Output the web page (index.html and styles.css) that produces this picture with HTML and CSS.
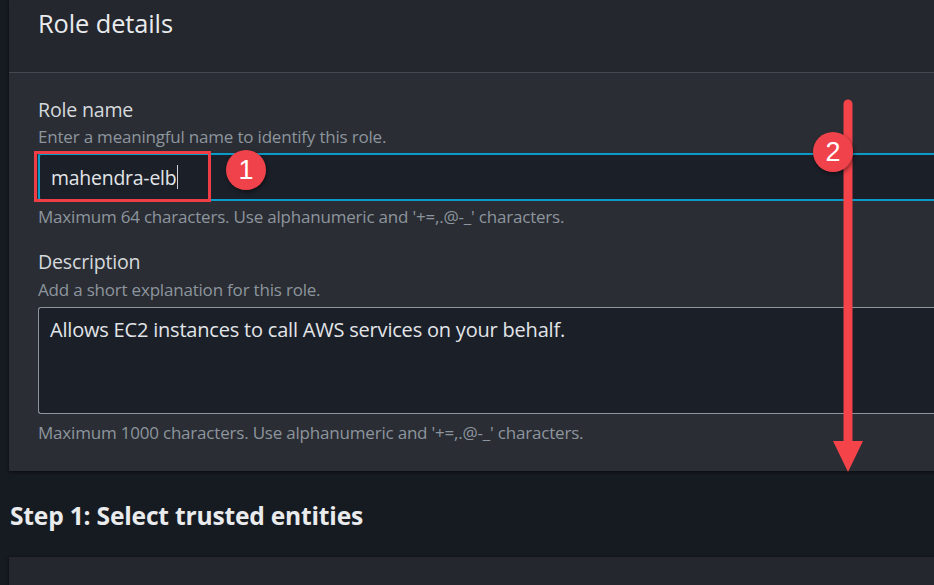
FILE: index.html
```html
<!DOCTYPE html>
<html>
<head>
<meta charset="utf-8">
<link rel="stylesheet" href="styles.css">
</head>
<body>
<div class="page">
  <section class="panel">
    <header class="panel-head"><h2>Role details</h2></header>
    <div class="panel-body">
      <div class="field">
        <div class="label">Role name</div>
        <div class="hint">Enter a meaningful name to identify this role.</div>
        <div class="input-wrap">
          <div class="input"><span class="val">mahendra-elb</span><span class="caret"></span></div>
          <div class="highlight"></div>
        </div>
        <div class="constraint">Maximum 64 characters. Use alphanumeric and '+=,.@-_' characters.</div>
      </div>
      <div class="field">
        <div class="label">Description</div>
        <div class="hint">Add a short explanation for this role.</div>
        <div class="textarea">Allows EC2 instances to call AWS services on your behalf.</div>
        <div class="constraint constraint-last">Maximum 1000 characters. Use alphanumeric and '+=,.@-_' characters.</div>
      </div>
    </div>
  </section>
  <h2 class="step">Step 1: Select trusted entities</h2>
  <section class="panel panel-next"></section>

  <div class="badge badge-1">1</div>
  <svg class="arrow" width="40" height="380" viewBox="0 0 40 380">
    <line x1="20" y1="5" x2="20" y2="345" stroke="#f5434a" stroke-width="9" stroke-linecap="round"/>
    <polygon points="5,342 35,342 20,373" fill="#f5434a"/>
  </svg>
  <div class="badge badge-2">2</div>
</div>
</body>
</html>
```
FILE: styles.css
```css
* { box-sizing: border-box; }
html, body { margin: 0; padding: 0; }
body {
  background: #161a21;
  font-family: "Open Sans", "Noto Sans", sans-serif;
  overflow: hidden;
  width: 934px;
  height: 585px;
}
.page {
  position: relative;
  padding-left: 9px;
  width: 934px;
  height: 585px;
  overflow: hidden;
}
.panel {
  background: #2a2d33;
  box-shadow: 0 1px 3px rgba(0,0,0,0.6);
  width: 1000px;
}
.panel-head {
  background: #24272e;
  height: 73px;
  border-bottom: 1px solid #434851;
  padding: 5px 29px 0;
}
.panel-head h2 {
  margin: 0;
  font-size: 25.4px;
  font-weight: 400;
  color: #e9ebed;
  line-height: 36px;
  letter-spacing: -0.1px;
}
.panel-body {
  padding: 25px 29px 27px;
  display: flex;
  flex-direction: column;
  gap: 22px;
}
.label {
  font-size: 19.6px;
  color: #d5d9dd;
  line-height: 24px;
  letter-spacing: -0.2px;
}
.hint, .constraint {
  font-size: 17px;
  color: #8d959e;
  line-height: 22px;
  letter-spacing: -0.2px;
}
.hint { margin-top: 4px; margin-bottom: 5px; }
.field:nth-child(2) .hint { margin-top: 5px; margin-bottom: 6px; }
.constraint { margin-top: 5px; }
.constraint-last { margin-top: 8px; }
.input-wrap { position: relative; }
.input {
  height: 48px;
  background: #1b1f28;
  border: 2px solid #0a9bc8;
  border-right: none;
  border-radius: 3px 0 0 3px;
  padding: 0 11px;
  display: flex;
  align-items: center;
  font-size: 19.4px;
  color: #e2e5e8;
  letter-spacing: -0.2px;
}
.caret {
  display: inline-block;
  width: 1px;
  height: 24px;
  background: #d0d4d8;
  margin-left: 1px;
}
.highlight {
  position: absolute;
  left: -4px;
  top: -2px;
  width: 177px;
  height: 51px;
  border: 3px solid #ef3d45;
}
.textarea {
  height: 107px;
  background: #1b1f28;
  border: 1px solid #8c949c;
  border-right: none;
  border-radius: 3px 0 0 3px;
  padding: 8px 11px;
  font-size: 20px;
  color: #e2e5e8;
  line-height: 28px;
  letter-spacing: -0.2px;
}
.step {
  margin: 0;
  padding: 28px 0 24px 1px;
  font-size: 24.6px;
  font-weight: 700;
  color: #e9ebed;
  line-height: 34px;
  letter-spacing: -0.2px;
}
.panel-next {
  background: #24272e;
  height: 28px;
}
.badge {
  position: absolute;
  width: 40px;
  height: 40px;
  border-radius: 50%;
  background: #f0424a;
  color: #ffffff;
  font-family: "Liberation Sans", "Noto Sans", sans-serif;
  font-size: 27px;
  line-height: 40px;
  text-align: center;
  box-shadow: 1px 2px 4px rgba(0,0,0,0.45);
}
.badge-1 { left: 226px; top: 150px; }
.badge-2 { left: 813px; top: 132px; }
.arrow {
  position: absolute;
  left: 828px;
  top: 99px;
}
```
